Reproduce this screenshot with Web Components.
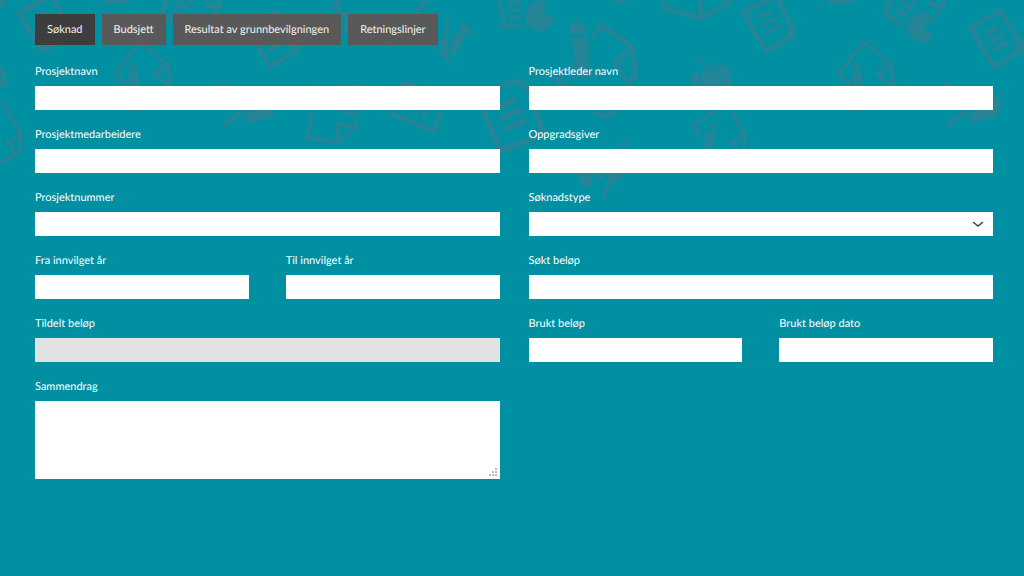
<!DOCTYPE html>
<html lang="no">
<head>
<meta charset="utf-8">
<meta name="viewport" content="width=device-width, initial-scale=1">
<title>Søknad</title>
<style>
  html { background: #0090a2; }
  body { margin: 0; color: #fff; font: 11px/16px Lato, "Liberation Sans", sans-serif; text-rendering: geometricPrecision; }
</style>
</head>
<body>
<application-page>
  <tab-bar slot="tabs">
    <tab-button selected>Søknad</tab-button>
    <tab-button>Budsjett</tab-button>
    <tab-button>Resultat av grunnbevilgningen</tab-button>
    <tab-button>Retningslinjer</tab-button>
  </tab-bar>
  <form-column>
    <form-field label="Prosjektnavn"></form-field>
    <form-field label="Prosjektmedarbeidere"></form-field>
    <form-field label="Prosjektnummer"></form-field>
    <field-pair>
      <form-field label="Fra innvilget år"></form-field>
      <form-field label="Til innvilget år"></form-field>
    </field-pair>
    <form-field label="Tildelt beløp" disabled></form-field>
    <form-field label="Sammendrag" kind="textarea"></form-field>
  </form-column>
  <form-column>
    <form-field label="Prosjektleder navn"></form-field>
    <form-field label="Oppgradsgiver"></form-field>
    <form-field label="Søknadstype" kind="select"></form-field>
    <form-field label="Søkt beløp"></form-field>
    <field-pair>
      <form-field label="Brukt beløp"></form-field>
      <form-field label="Brukt beløp dato"></form-field>
    </field-pair>
  </form-column>
</application-page>

<script>
const define = (name, html, setup) => customElements.define(name, class extends HTMLElement {
  constructor() {
    super();
    this.attachShadow({ mode: 'open' });
  }
  connectedCallback() {
    this.shadowRoot.innerHTML = html;
    if (setup) setup(this, this.shadowRoot);
  }
});

define('doodle-backdrop', `
<style>
  :host { display: block; position: absolute; inset: 0 0 auto 0; height: 210px; overflow: hidden; pointer-events: none; }
  svg { display: block; width: 100%; height: 100%; }
  .line { fill: none; stroke: #258596; stroke-width: 5; }
  .thin { stroke-width: 4; }
  .bold { stroke-width: 6; }
  .fill { fill: #258596; }
</style>
<svg aria-hidden="true">
  <defs>
    <g id="tile">
      <!-- sheet of text -->
      <path class="line" d="M52-4L19 13L42 51L68 36V27L52-4"/>
      <path class="fill" d="M61 30l6-3 4 2v8l-6 3z"/>
      <path class="line thin" d="M33 18l14-7M37 26l16-8M41 34l16-8"/>
      <!-- folded sheet with pencil -->
      <path class="line thin" d="M127 85L115 73L140 42L167 64L171 87M167 64L154 74L170 87M124 109l12 1 10-2"/>
      <path class="fill" d="M132 62l6 7-11 1zM128 73l10-1 2 37-8 1z"/>
      <!-- pencil clippings -->
      <path class="fill" d="M103 0l29 0-3 2-22 3zM93 9l4-7 3 2zM0 0h6L5 4l-5 3z"/>
      <!-- writing hand -->
      <path class="fill" d="M219 82l9 1v5l-9-2zM222 123l20-15 8 1-26 18zM240 120l15-12 20-8 3 7-6 10-19 5zM269 99l9-8-4 10z"/>
      <!-- report with pie chart -->
      <path class="line" d="M169-4L161 14L178 24M218-5L220 4L213 14"/>
      <path class="line" d="M173 10l10 6M177 2l12 7M183-4l10 6"/>
      <path class="fill" d="M211 19A15 15 0 1 0 210 37L198 26zM205 0l13 5-3 5-12-5z"/>
      <!-- second sheet of text -->
      <path class="line" d="M247 28L276 11L297 43V50L270 67Z"/>
      <path class="fill" d="M288 46l7-4 5 2v8l-6 2z"/>
      <path class="line" d="M261 34l13-7M265 42l15-8M269 50l15-8"/>
      <!-- chart and compass -->
      <path class="line" d="M345-4L333 6L349 17M428-3L405 30L391 46L382 40M347 18v14"/>
      <path class="line thin" d="M447 19l-1 31M442 38l4 18"/>
      <path class="fill" d="M463 22l11 9-5 6-11-9zM458 30l8 8-11 17-6-2 1-9zM435 43l13 14v3l-5-1zM447 57l2 1v8l-1 0z"/>
      <!-- folded sheet with chart -->
      <path class="line thin" d="M315 84L308 138L337 142L356 127V117M337 142L338 124L356 127"/>
      <path class="fill" d="M345 84h12l3 3h-20zM340 109h19v4l-8 3-10-4z"/>
      <!-- tilted bar report -->
      <path class="line" d="M404 81L391 114L434 131L442 108M402 82l24 8"/>
      <path class="line thin" d="M409 110l-2 4M418 108l-3 7M427 109l-4 10"/>
      <!-- report with pie -->
      <path class="line thin" d="M499-3L504 27L523 25"/>
      <path class="line thin" d="M507 4l14-2M508 11l14-2M509 18l12-2"/>
      <path class="fill" d="M548 3A15 15 0 1 0 555 18L542 13zM610 0h16l-3 5z"/>
      <!-- large text sheet -->
      <path class="line bold" d="M483 109L500 151L544 134L527 86L514 81L500 87"/>
      <path class="line bold" d="M498 108l19-9M501 119l22-10M504 130l22-10"/>
      <!-- large pencil over a folded sheet -->
      <path class="fill" d="M569 30c-1-11 15-11 16-3v6l-15 2zM572 38l15-2 4 41h-14z"/>
      <path class="line" d="M593 38L601 25L632 47L636 75L625 86M632 47L615 63L626 80M572 65L557 80L567 87M591 109L606 117L620 107"/>
      <!-- hand with pen -->
      <path class="fill" d="M576 174l12-3 6 13-10 5zM591 172l14 0-1 8-7-2zM608 172h17l-6 9-11 1zM619 150l6-13v12zM602 197l8-26 6 1-10 27z"/>
      <!-- open envelope -->
      <path class="line" d="M664-4L663 8L701 18L728 3V-4M701 18V-4"/>
      <!-- small hand -->
      <path class="fill" d="M692 73h6v13h-6zM700 74l7-3 6 3 12 7 2-7 4 2 1 10h-32zM712 66l7-2 9 4 4 13-5-3z"/>
      <path class="line thin" d="M699 60l26 21"/>
      <!-- small folded sheet with pencil -->
      <path class="line thin" d="M701 137L694 125L718 109M726 101L745 135L744 151L724 163L704 155M746 135L732 142L739 154"/>
      <path class="fill" d="M714 121l3 9-9-2zM706 131l10 2-8 33-7-2z"/>
    </g>
  </defs>
  <use href="#tile" x="-724"/><use href="#tile"/><use href="#tile" x="724"/><use href="#tile" x="1448"/>
</svg>`);

define('application-page', `
<style>
  :host { display: block; position: relative; min-height: 100vh; box-sizing: border-box; padding: 14px 31px 32px 35px; background: #0090a2; }
  main { position: relative; display: grid; gap: 19px; }
  form { display: grid; grid-template-columns: 1fr 1fr; gap: 29px; align-items: start; }
</style>
<doodle-backdrop></doodle-backdrop>
<main><slot name="tabs"></slot><form><slot></slot></form></main>`);

define('tab-bar', `
<style>
  :host { display: block; }
  nav { display: flex; flex-wrap: wrap; gap: 7px; }
</style>
<nav><slot></slot></nav>`);

define('tab-button', `
<style>
  :host { display: block; }
  button { display: block; height: 31px; margin: 0; padding: 0 12px; border: 0; background: #595959; color: #f4f4f4; font: inherit; text-rendering: inherit; cursor: pointer; }
  :host([selected]) button { background: #3d3d3d; }
</style>
<button type="button"><slot></slot></button>`,
(host, root) => root.querySelector('button').setAttribute('aria-pressed', host.hasAttribute('selected')));

define('form-column', `
<style>:host { display: grid; gap: 17px; min-width: 0; }</style><slot></slot>`);

define('field-pair', `
<style>:host { display: grid; grid-template-columns: 1fr 1fr; gap: 37px; min-width: 0; }</style><slot></slot>`);

const controls = {
  input: '<input id="control" type="text">',
  select: `<select id="control"><option value=""></option></select>
    <svg class="chevron" viewBox="0 0 12 7" aria-hidden="true"><path d="M1 1L6 5L11 1" fill="none" stroke="#444" stroke-width="1.600"/></svg>`,
  textarea: `<textarea id="control"></textarea>
    <svg class="grip" viewBox="0 0 8 8" aria-hidden="true"><path d="M6 0h2v2H6zM6 3h2v2H6zM3 3h2v2H3zM6 6h2v2H6zM3 6h2v2H3zM0 6h2v2H0z" fill="#bbb"/></svg>`
};

define('form-field', `
<style>
  :host { display: block; min-width: 0; }
  label { display: block; margin-bottom: 6px; }
  div { position: relative; }
  input, select, textarea { display: block; box-sizing: border-box; width: 100%; height: 24px; margin: 0; padding: 2px 8px; border: 0; border-radius: 0; background: #fff; color: #333; font: inherit; appearance: none; }
  textarea { height: 78px; resize: none; }
  input:disabled { background: #e2e2e2; }
  svg { position: absolute; pointer-events: none; }
  .chevron { right: 9px; top: 9px; width: 12px; height: 7px; }
  .grip { right: 3px; bottom: 3px; width: 8px; height: 8px; }
</style>
<label for="control"></label><div></div>`,
(host, root) => {
  root.querySelector('label').textContent = host.getAttribute('label');
  root.querySelector('div').innerHTML = controls[host.getAttribute('kind') || 'input'];
  root.querySelector('#control').disabled = host.hasAttribute('disabled');
});
</script>
</body>
</html>
